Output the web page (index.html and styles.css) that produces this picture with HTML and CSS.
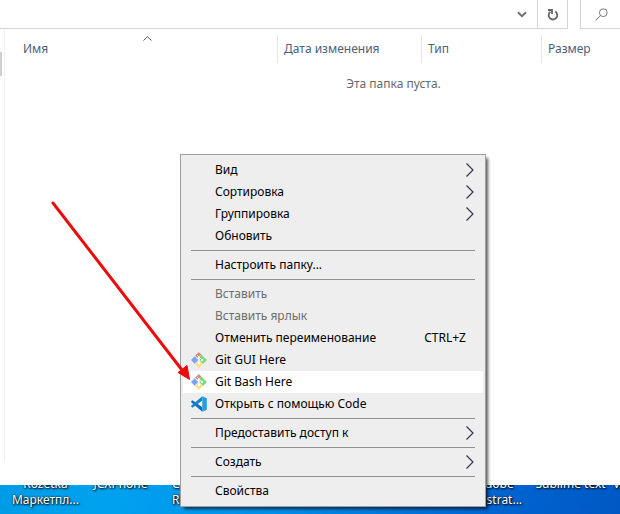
FILE: index.html
```html
<!DOCTYPE html>
<html lang="ru">
<head>
<meta charset="utf-8">
<title>Проводник</title>
<link rel="stylesheet" href="styles.css">
</head>
<body>
<svg class="defs" aria-hidden="true">
  <symbol id="chevron" viewBox="0 0 8 14"><path d="M0.5 0.5 7 7 0.5 13.5" fill="none" stroke="#35354a" stroke-width="1.2"/></symbol>
  <symbol id="git" viewBox="0 0 16 16">
    <path d="M7.800 0 10.500 2.700 7.200 6.200 4 3.700Z" fill="#ee8080"/>
    <path d="M10 2.200 15.900 8 12 12 8.300 8.200V4.500Z" fill="#80d878"/>
    <path d="M3.600 4.300 7.300 8 3.600 11.700 0 8Z" fill="#7aa4f2"/>
    <path d="M7.700 8.500 11.800 12.200 8 16 4 12Z" fill="#f8e08a"/>
    <path d="M6 3 10.800 7.800M8 5V11" fill="none" stroke="#fff" stroke-width=".9"/>
    <circle cx="8" cy="5.200" r="1" fill="#fff"/><circle cx="11" cy="8" r="1.200" fill="#fff"/><circle cx="8" cy="11" r="1.200" fill="#fff"/>
  </symbol>
  <symbol id="code" viewBox="0 0 16 16">
    <path d="M1.500 4.200.2 5.300V6.200L11.300 15.800V11.300Z" fill="#0b70b8"/>
    <path d="M.2 9.700V10.600L1.500 11.800 11.300 4.600V.2Z" fill="#1684cc"/>
    <path d="M11.300 .2 15.800 2.200V13.800L11.300 15.800Z" fill="#239ce2"/>
  </symbol>
</svg>

<main class="window">
  <header class="toolbar">
    <div class="address">
      <button class="tool drop" aria-label="Предыдущие расположения"><svg width="10" height="7" viewBox="0 0 10 7"><path d="M1 1.300 5 5.200 9 1.300" fill="none" stroke="#707070" stroke-width="2"/></svg></button>
      <button class="tool refresh" aria-label="Обновить"><svg width="12" height="13" viewBox="0 0 12 13"><path d="M8.300 3.600A4.300 4.300 0 1 1 3.300 3.800M1 2H5V6" fill="none" stroke="#666" stroke-width="1.800"/></svg></button>
    </div>
    <button class="tool search" aria-label="Поиск"><svg width="13" height="13" viewBox="0 0 13 13"><circle cx="8.300" cy="4.700" r="3.900" fill="none" stroke="#777"/><path d="M5.500 7.500.5 12.500" stroke="#777"/></svg></button>
  </header>
  <section class="files">
    <div class="nav"></div>
    <div class="list">
      <div class="columns">
        <button class="column name">Имя<svg class="sort" width="9" height="5" viewBox="0 0 9 5"><path d="M.5 4.500 4.500.700 8.500 4.500" fill="none" stroke="#555"/></svg></button>
        <button class="column date">Дата изменения</button>
        <button class="column type">Тип</button>
        <button class="column size">Размер</button>
      </div>
      <p class="empty">Эта папка пуста.</p>
    </div>
  </section>
</main>

<ul class="desktop">
  <li>Rozetka<br>Маркетпл...</li>
  <li>JCXPhone</li>
  <li class="start">C<br>R</li>
  <li></li>
  <li></li>
  <li></li>
  <li>Adobe<br>Illustrat...</li>
  <li>Sublime text</li>
  <li class="start edge">V</li>
</ul>

<div class="menu" role="menu">
  <button class="item" role="menuitem"><span class="label">Вид</span><svg class="more"><use href="#chevron"/></svg></button>
  <button class="item" role="menuitem"><span class="label">Сортировка</span><svg class="more"><use href="#chevron"/></svg></button>
  <button class="item" role="menuitem"><span class="label">Группировка</span><svg class="more"><use href="#chevron"/></svg></button>
  <button class="item" role="menuitem"><span class="label">Обновить</span></button>
  <hr>
  <button class="item" role="menuitem"><span class="label">Настроить папку...</span></button>
  <hr>
  <button class="item" role="menuitem" disabled><span class="label">Вставить</span></button>
  <button class="item" role="menuitem" disabled><span class="label">Вставить ярлык</span></button>
  <button class="item" role="menuitem"><span class="label">Отменить переименование</span><span class="key">CTRL+Z</span></button>
  <button class="item" role="menuitem"><svg class="icon"><use href="#git"/></svg><span class="label">Git GUI Here</span></button>
  <button class="item active" role="menuitem"><svg class="icon"><use href="#git"/></svg><span class="label">Git Bash Here</span></button>
  <button class="item" role="menuitem"><svg class="icon"><use href="#code"/></svg><span class="label">Открыть с помощью Code</span></button>
  <hr>
  <button class="item" role="menuitem"><span class="label">Предоставить доступ к</span><svg class="more"><use href="#chevron"/></svg></button>
  <hr>
  <button class="item" role="menuitem"><span class="label">Создать</span><svg class="more"><use href="#chevron"/></svg></button>
  <hr>
  <button class="item" role="menuitem"><span class="label">Свойства</span></button>
</div>

<svg class="pointer" width="142" height="182" viewBox="0 0 142 182" aria-hidden="true">
  <path d="M3 3 132 170" stroke="#ec0c0c" stroke-width="3" stroke-linecap="round"/>
  <path d="M139.500 179.500 128 172.500 137 165.500Z" fill="#ec0c0c" stroke="#ec0c0c"/>
</svg>
</body>
</html>
```
FILE: styles.css
```css
* { box-sizing: border-box; }

body {
  margin: 0;
  height: 100vh;
  display: flex;
  flex-direction: column;
  overflow: hidden;
  position: relative;
  background: linear-gradient(100deg, #0096e0, #00a2ef 28%, #0090ea 50%, #0068d4 78%, #0058c4);
  font: 12px/16px "Noto Sans", "Open Sans", sans-serif;
  color: #000;
}

button {
  margin: 0;
  padding: 0;
  border: 0;
  background: none;
  font: inherit;
  color: inherit;
  text-align: left;
}

.defs { position: absolute; width: 0; height: 0; }

.window {
  flex: 1;
  display: flex;
  flex-direction: column;
  position: relative;
  z-index: 1;
  background: #fff;
}

.toolbar { display: flex; gap: 12px; height: 29px; }
.address { flex: 1; display: flex; justify-content: flex-end; border: solid #d4d4d4; border-width: 0 1px 1px 0; }
.tool { display: flex; align-items: center; justify-content: center; }
.drop { width: 30px; }
.refresh { width: 30px; border-left: 1px solid #d4d4d4; }
.search {
  justify-content: flex-start;
  width: 40px;
  padding-left: 14px;
  border: solid #d4d4d4;
  border-width: 0 0 1px 1px;
}

.files { flex: 1; display: flex; padding-bottom: 24px; }
.nav { width: 5px; border-right: 1px solid #f0f0f0; }
.nav::before { content: ""; display: block; width: 2px; height: 24px; margin-top: 23px; background: #d0d0d0; }
.list { flex: 1; }

.columns { display: flex; height: 40px; padding: 6px 0; color: #4c607a; }
.column { position: relative; padding-left: 6px; border-right: 1px solid #e2e6ea; }
.name { width: 273px; padding-left: 18px; }
.date { width: 144px; }
.type { width: 120px; }
.size { flex: 1; border: 0; }
.sort { position: absolute; left: 138px; top: 1px; }

.empty { margin: 7px 0 0; padding-left: 162px; text-align: center; color: #6a6a6a; }

.desktop {
  display: grid;
  grid-template-columns: repeat(9, 75px);
  margin: -9px 0 0;
  padding: 0 0 6px 8px;
  height: 38px;
  overflow: hidden;
  list-style: none;
  text-align: center;
  white-space: nowrap;
  color: #fff;
  text-shadow: 1px 1px 2px #000, 0 0 2px #000;
}
.desktop .start { text-align: left; padding-left: 14px; }
.desktop .edge { padding-left: 5px; }

.menu {
  position: absolute;
  left: 180px;
  top: 154px;
  z-index: 2;
  width: 306px;
  padding: 4px 2px;
  border: 1px solid #a0a0a0;
  background: #eee;
  box-shadow: 3px 3px 3px -1px rgba(0, 0, 0, 0.65);
}
.menu hr { height: 1px; margin: 3px 8px; border: 0; background: #919191; }
.item {
  display: grid;
  grid-template-columns: 16px 1fr auto;
  column-gap: 8px;
  align-items: center;
  width: 100%;
  height: 22px;
  padding: 0 9px 0 8px;
}
.item:disabled { color: #6d6d6d; }
.active { background: #fff; }
.icon { width: 16px; height: 16px; }
.label { grid-column: 2; }
.key { padding-right: 8px; }
.more { width: 8px; height: 14px; }

.pointer { position: absolute; left: 50px; top: 200px; z-index: 3; }
```
